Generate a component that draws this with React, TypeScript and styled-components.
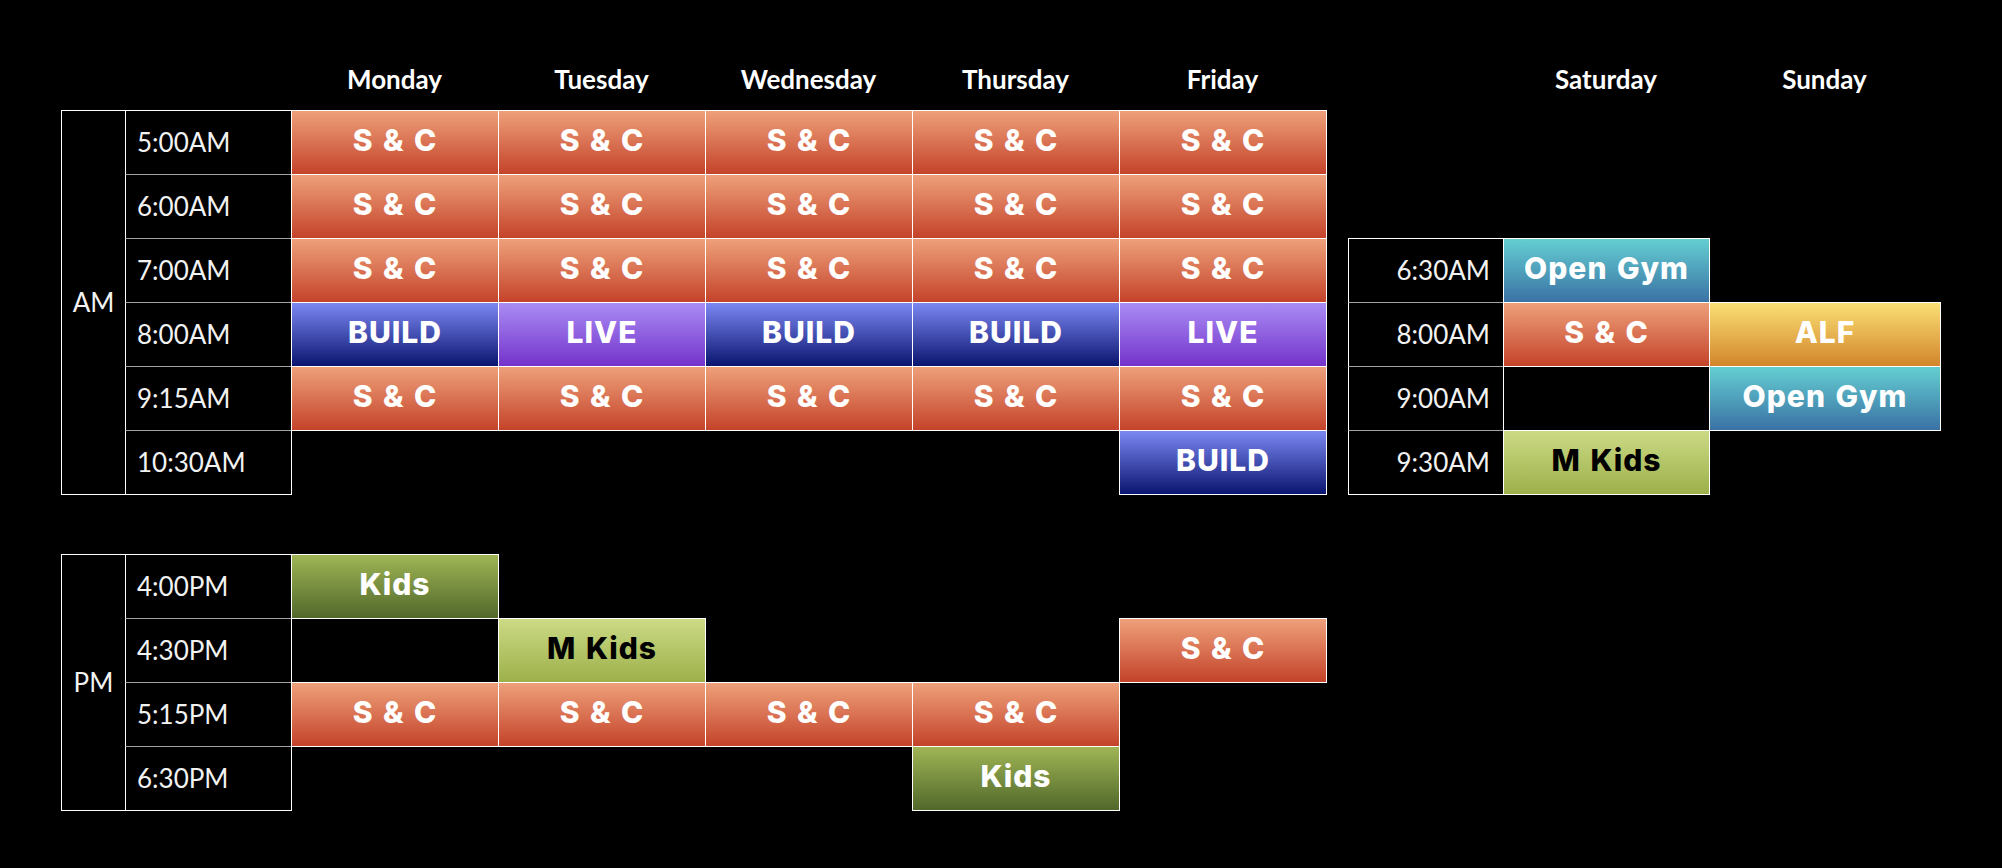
import React from "react";
import styled, { createGlobalStyle } from "styled-components";

type Kind = "sc" | "build" | "live" | "gym" | "alf" | "mkids" | "kids";

const classes: Record<Kind, { label: string; top: string; bottom: string; ink: string }> = {
  sc: { label: "S & C", top: "#eea07a", bottom: "#c4432a", ink: "#ffffff" },
  build: { label: "BUILD", top: "#7c88f2", bottom: "#0a1570", ink: "#ffffff" },
  live: { label: "LIVE", top: "#a98cf4", bottom: "#7433cb", ink: "#ffffff" },
  gym: { label: "Open Gym", top: "#64ced1", bottom: "#3a72a5", ink: "#ffffff" },
  alf: { label: "ALF", top: "#fadf74", bottom: "#d3852c", ink: "#ffffff" },
  mkids: { label: "M Kids", top: "#ccda85", bottom: "#9cb04a", ink: "#000000" },
  kids: { label: "Kids", top: "#9fb555", bottom: "#51682b", ink: "#ffffff" },
};

// grid columns: 1 spacer, 2 am/pm, 3 time, 4-8 weekdays, 9 gap, 10 weekend time, 11 sat, 12 sun
const weekdays = ["Monday", "Tuesday", "Wednesday", "Thursday", "Friday"];
const weekend = ["Saturday", "Sunday"];

type Slot = { time: string; events: (Kind | null)[] };

const amSlots: Slot[] = [
  { time: "5:00AM", events: ["sc", "sc", "sc", "sc", "sc"] },
  { time: "6:00AM", events: ["sc", "sc", "sc", "sc", "sc"] },
  { time: "7:00AM", events: ["sc", "sc", "sc", "sc", "sc"] },
  { time: "8:00AM", events: ["build", "live", "build", "build", "live"] },
  { time: "9:15AM", events: ["sc", "sc", "sc", "sc", "sc"] },
  { time: "10:30AM", events: [null, null, null, null, "build"] },
];

const pmSlots: Slot[] = [
  { time: "4:00PM", events: ["kids", null, null, null, null] },
  { time: "4:30PM", events: [null, "mkids", null, null, "sc"] },
  { time: "5:15PM", events: ["sc", "sc", "sc", "sc", null] },
  { time: "6:30PM", events: [null, null, null, "kids", null] },
];

const weekendSlots: Slot[] = [
  { time: "6:30AM", events: ["gym", null] },
  { time: "8:00AM", events: ["sc", "alf"] },
  { time: "9:00AM", events: [null, "gym"] },
  { time: "9:30AM", events: ["mkids", null] },
];

const GlobalStyle = createGlobalStyle`
  html, body {
    margin: 0;
    padding: 0;
    background: #000;
  }
  body {
    font-family: Lato, "Noto Sans", sans-serif;
    color: #fff;
  }
`;

const Board = styled.div`
  display: grid;
  grid-template-columns: 61px 64px 166px repeat(5, 207px) 22px 155px 206px 231px;
  grid-template-rows: 110px repeat(6, 64px) 60px repeat(4, 64px);
  width: 2002px;
  height: 868px;
  background: #000;
  overflow: hidden;
`;

const DayHeading = styled.div<{ $col: number }>`
  grid-column: ${(p) => p.$col};
  grid-row: 1;
  display: flex;
  align-items: center;
  justify-content: center;
  padding-top: 48px;
  font-size: 26px;
  font-weight: 700;
  color: #fff;
`;

const PeriodLabel = styled.div<{ $row: number; $span: number }>`
  grid-column: 2;
  grid-row: ${(p) => `${p.$row} / span ${p.$span}`};
  margin: 0 -1px -1px 0;
  border: 1px solid #fff;
  display: flex;
  align-items: center;
  justify-content: center;
  padding-bottom: 2px;
  font-size: 26px;
  color: #f2f2f2;
`;

const TimeCell = styled.div<{
  $col: number;
  $row: number;
  $first: boolean;
  $last: boolean;
  $right?: boolean;
}>`
  grid-column: ${(p) => p.$col};
  grid-row: ${(p) => p.$row};
  margin: 0 -1px -1px 0;
  border-left: 1px solid #fff;
  border-right: 1px solid #fff;
  border-top: 1px solid ${(p) => (p.$first ? "#fff" : "#a3a3a3")};
  border-bottom: 1px solid ${(p) => (p.$last ? "#fff" : "#a3a3a3")};
  display: flex;
  align-items: center;
  justify-content: ${(p) => (p.$right ? "flex-end" : "flex-start")};
  padding: ${(p) => (p.$right ? "0 13px 2px 0" : "0 0 2px 11px")};
  font-size: 26px;
  color: #f2f2f2;
`;

const EventCell = styled.div<{ $col: number; $row: number; $kind: Kind }>`
  grid-column: ${(p) => p.$col};
  grid-row: ${(p) => p.$row};
  margin: 0 -1px -1px 0;
  border: 1px solid #fff;
  position: relative;
  z-index: 1;
  display: flex;
  align-items: center;
  justify-content: center;
  background: linear-gradient(
    to bottom,
    ${(p) => classes[p.$kind].top},
    ${(p) => classes[p.$kind].bottom}
  );
  color: ${(p) => classes[p.$kind].ink};
  font-family: Inter, Lato, sans-serif;
  font-size: 30px;
  font-weight: 800;
  letter-spacing: 1px;
  word-spacing: 2px;
  padding-bottom: 5px;
`;

function SlotRows({
  slots,
  startRow,
  timeCol,
  firstEventCol,
  alignRight,
}: {
  slots: Slot[];
  startRow: number;
  timeCol: number;
  firstEventCol: number;
  alignRight?: boolean;
}) {
  return (
    <>
      {slots.map((slot, i) => (
        <React.Fragment key={slot.time + timeCol}>
          <TimeCell
            $col={timeCol}
            $row={startRow + i}
            $first={i === 0}
            $last={i === slots.length - 1}
            $right={alignRight}
          >
            {slot.time}
          </TimeCell>
          {slot.events.map((kind, d) =>
            kind ? (
              <EventCell
                key={d}
                $col={firstEventCol + d}
                $row={startRow + i}
                $kind={kind}
              >
                {classes[kind].label}
              </EventCell>
            ) : null
          )}
        </React.Fragment>
      ))}
    </>
  );
}

export default function App() {
  return (
    <>
      <GlobalStyle />
      <Board>
        {weekdays.map((day, i) => (
          <DayHeading key={day} $col={4 + i}>
            {day}
          </DayHeading>
        ))}
        {weekend.map((day, i) => (
          <DayHeading key={day} $col={11 + i}>
            {day}
          </DayHeading>
        ))}

        <PeriodLabel $row={2} $span={6}>AM</PeriodLabel>
        <SlotRows slots={amSlots} startRow={2} timeCol={3} firstEventCol={4} />

        <PeriodLabel $row={9} $span={4}>PM</PeriodLabel>
        <SlotRows slots={pmSlots} startRow={9} timeCol={3} firstEventCol={4} />

        <SlotRows
          slots={weekendSlots}
          startRow={4}
          timeCol={10}
          firstEventCol={11}
          alignRight
        />
      </Board>
    </>
  );
}
